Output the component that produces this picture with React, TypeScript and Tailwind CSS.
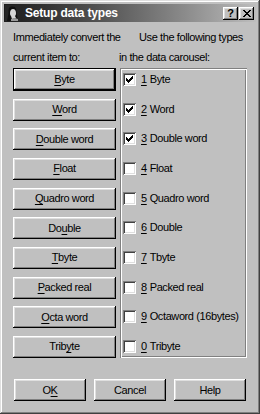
import React from "react";

const BTN =
  "flex items-center justify-center bg-[#c0c0c0] shadow-[inset_-1px_-1px_#000,inset_1px_1px_#fff,inset_-2px_-2px_#808080,inset_2px_2px_#dfdfdf]";

type Item = { pre: string; key: string; post: string };

const convertButtons: Item[] = [
  { pre: "", key: "B", post: "yte" },
  { pre: "", key: "W", post: "ord" },
  { pre: "", key: "D", post: "ouble word" },
  { pre: "", key: "F", post: "loat" },
  { pre: "", key: "Q", post: "uadro word" },
  { pre: "Do", key: "u", post: "ble" },
  { pre: "", key: "T", post: "byte" },
  { pre: "", key: "P", post: "acked real" },
  { pre: "", key: "O", post: "cta word" },
  { pre: "Trib", key: "y", post: "te" },
];

const carouselTypes = [
  { key: "1", label: "Byte", checked: true },
  { key: "2", label: "Word", checked: true },
  { key: "3", label: "Double word", checked: true },
  { key: "4", label: "Float", checked: false },
  { key: "5", label: "Quadro word", checked: false },
  { key: "6", label: "Double", checked: false },
  { key: "7", label: "Tbyte", checked: false },
  { key: "8", label: "Packed real", checked: false },
  { key: "9", label: "Octaword (16bytes)", checked: false },
  { key: "0", label: "Tribyte", checked: false },
];

const Mnemonic = ({ item }: { item: Item }) => (
  <span>
    {item.pre}
    <u className="underline-offset-[2px]">{item.key}</u>
    {item.post}
  </span>
);

const Checkbox = ({ checked }: { checked: boolean }) => (
  <div className="w-[13px] h-[13px] shrink-0 bg-white flex items-center justify-center shadow-[inset_1px_1px_#808080,inset_-1px_-1px_#fff,inset_2px_2px_#404040,inset_-2px_-2px_#dfdfdf]">
    {checked && (
      <svg width="7" height="7" viewBox="0 0 7 7" shapeRendering="crispEdges">
        <path d="M0 2h1v3H0zM1 3h1v3H1zM2 4h1v3H2zM3 3h1v3H3zM4 2h1v3H4zM5 1h1v3H5zM6 0h1v3H6z" fill="#000" />
      </svg>
    )}
  </div>
);

// small grayscale portrait used as the window icon
const TitleIcon = () => (
  <svg width="16" height="16" viewBox="0 0 16 16">
    <rect width="16" height="16" fill="#262626" />
    <path d="M4 3c2-2 6-2 7 1 1 2 0 4 1 6l1 6H2l1-5c1-2 0-5 1-8z" fill="#111" />
    <path d="M8 4c2 0 3 2 3 4 0 1 0 2-1 3l1 2-4 1-1-3c-1-1-1-2-1-3 0-2 1-4 3-4z" fill="#d6d6d6" />
    <path d="M6 14l4-1 3 1v2H6z" fill="#9a9a9a" />
  </svg>
);

export default function App() {
  return (
    <div className="w-[260px] h-[414px] bg-[#c0c0c0] p-[4px] text-[11px] tracking-[-0.4px] leading-none text-black font-['Liberation_Sans',Arial,sans-serif] shadow-[inset_-1px_-1px_#404040,inset_1px_1px_#dfdfdf,inset_-2px_-2px_#808080,inset_2px_2px_#fff]">
      {/* title bar */}
      <div className="h-[18px] flex items-center bg-linear-to-r from-[#1c1c1c] to-[#bdbdbd]">
        <div className="w-[16px] h-[16px] ml-[1px]">
          <TitleIcon />
        </div>
        <span className="ml-[4px] text-[12px] tracking-[-0.2px] font-bold text-white whitespace-nowrap">
          Setup data types
        </span>
        <div className="ml-auto mr-[2px] flex gap-[1px]">
          <div className={`${BTN} w-[15px] h-[13px] text-[11px] font-bold`}>?</div>
          <div className={`${BTN} w-[15px] h-[13px]`}>
            <svg width="8" height="7" viewBox="0 0 8 7" shapeRendering="crispEdges">
              <path d="M0 0h2v1H0zM6 0h2v1H6zM1 1h2v1H1zM5 1h2v1H5zM2 2h4v1H2zM3 3h2v1H3zM2 4h4v1H2zM1 5h2v1H1zM5 5h2v1H5zM0 6h2v1H0zM6 6h2v1H6z" fill="#000" />
            </svg>
          </div>
        </div>
      </div>

      <div className="px-[9px] pt-[5px]">
        {/* headings */}
        <div className="flex h-[20px] items-center whitespace-nowrap">
          <span className="w-[126px]">Immediately convert the</span>
          <span>Use the following types</span>
        </div>
        <div className="flex h-[20px] items-center whitespace-nowrap">
          <span className="w-[106px]">current item to:</span>
          <span>in the data carousel:</span>
        </div>

        {/* main */}
        <div className="mt-[1px] flex gap-[4px]">
          <div className="w-[103px] h-[290px] flex flex-col justify-between">
            {convertButtons.map((b, i) => (
              <div
                key={i}
                className={`${BTN} ${i === 0 ? "h-[23px] border border-black" : "h-[22px]"}`}
              >
                <Mnemonic item={b} />
              </div>
            ))}
          </div>
          <div className="w-[127px] h-[290px] py-[5px] pl-[3px] flex flex-col justify-between shadow-[inset_1px_1px_#808080,inset_2px_2px_#fff,inset_-1px_-1px_#fff,inset_-2px_-2px_#808080]">
            {carouselTypes.map((c) => (
              <div key={c.key} className="h-[13px] flex items-center gap-[5px] whitespace-nowrap">
                <Checkbox checked={c.checked} />
                <span>
                  <u className="underline-offset-[2px] mr-[3px]">{c.key}</u>
                  {c.label}
                </span>
              </div>
            ))}
          </div>
        </div>

        {/* dialog buttons */}
        <div className="mt-[21px] pl-[1px] flex gap-[8px]">
          <div className={`${BTN} w-[72px] h-[22px]`}>
            <span>
              O<u className="underline-offset-[2px]">K</u>
            </span>
          </div>
          <div className={`${BTN} w-[72px] h-[22px]`}>Cancel</div>
          <div className={`${BTN} w-[72px] h-[22px]`}>Help</div>
        </div>
      </div>
    </div>
  );
}
